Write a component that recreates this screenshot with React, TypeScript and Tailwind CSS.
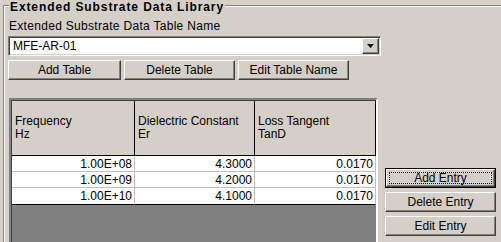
import React from "react";

const raised =
  "border border-t-white border-l-white border-r-[#404040] border-b-[#404040] shadow-[inset_-1px_-1px_0_#808080]";
const sunken =
  "border border-t-[#808080] border-l-[#808080] border-r-white border-b-white shadow-[inset_1px_1px_0_#404040,inset_-1px_-1px_0_#d4d0c8]";

const rows = [
  ["1.00E+08", "4.3000", "0.0170"],
  ["1.00E+09", "4.2000", "0.0170"],
  ["1.00E+10", "4.1000", "0.0170"],
];

const cols = [
  { w: "w-[123px]", a: "Frequency", b: "Hz" },
  { w: "w-[120px]", a: "Dielectric Constant", b: "Er" },
  { w: "w-[121px]", a: "Loss Tangent", b: "TanD" },
];

function Btn({ label, w }: { label: string; w: string }) {
  return (
    <button
      className={`${raised} ${w} h-[20px] bg-[#d4d0c8] flex items-center justify-center leading-[14px]`}
    >
      {label}
    </button>
  );
}

const App = () => {
  return (
    <div className="w-[501px] h-[242px] overflow-hidden bg-[#d4d0c8] text-[12px] text-black font-['Liberation_Sans',Arial,sans-serif]">
      <div className="relative ml-[3px] mt-[5px] w-[600px] h-[300px] border-t border-l border-[#808080] shadow-[inset_1px_1px_0_#fff] pl-[4px]">
        <span className="absolute -top-[5px] left-[5px] px-[1px] bg-[#d4d0c8] font-bold leading-[13px] tracking-[0.9px]">
          Extended Substrate Data Library
        </span>

        <div className="pt-[13px] pl-[1px] leading-[14px] tracking-[0.3px]">
          Extended Substrate Data Table Name
        </div>

        {/* combo */}
        <div className={`${sunken} mt-[3px] w-[373px] h-[20px] bg-white flex items-center p-[1px]`}>
          <span className="flex-1 pl-[3px] leading-[14px]">MFE-AR-01</span>
          <span className={`${raised} w-[17px] h-full bg-[#d4d0c8] flex items-center justify-center`}>
            <svg width="7" height="4" viewBox="0 0 7 4">
              <path d="M0 0h7L3.5 4z" fill="#000" />
            </svg>
          </span>
        </div>

        <div className="mt-[4px] flex gap-[3px]">
          <Btn label="Add Table" w="w-[113px]" />
          <Btn label="Delete Table" w="w-[111px]" />
          <Btn label="Edit Table Name" w="w-[111px]" />
        </div>

        <div className="mt-[18px] flex">
          {/* grid */}
          <div className="ml-[1px] w-[369px] h-[150px] border-2 border-t-[#808080] border-l-[#808080] border-r-white border-b-white">
            <div className="w-full h-full border-t border-l border-[#404040] bg-[#808080]">
              <div className="flex">
                {cols.map((c) => (
                  <div
                    key={c.a}
                    className={`${c.w} h-[55px] bg-[#d4d0c8] border-r border-b border-black flex flex-col justify-center pl-[3px] leading-[13px]`}
                  >
                    <span>{c.a}</span>
                    <span>{c.b}</span>
                  </div>
                ))}
              </div>
              {rows.map((r, i) => (
                <div key={i} className="flex">
                  {r.map((v, j) => (
                    <div
                      key={j}
                      className={`${cols[j].w} ${i === 2 ? "h-[17px] border-b-black" : "h-[16px] border-b-[#c0c0c0]"} border-b border-r border-r-[#c0c0c0] bg-white flex items-center justify-end pr-[2px] leading-[14px]`}
                    >
                      {v}
                    </div>
                  ))}
                </div>
              ))}
            </div>
          </div>

          <div className="ml-[7px] mt-[70px] flex flex-col gap-[4px] w-[111px]">
            <button className="w-[111px] h-[20px] border border-black bg-[#d4d0c8] flex">
              <span className={`${raised} flex-1 p-[2px] flex`}>
                <span className="flex-1 border border-dotted border-black flex items-center justify-center leading-[12px]">
                  Add Entry
                </span>
              </span>
            </button>
            <Btn label="Delete Entry" w="w-[111px]" />
            <Btn label="Edit Entry" w="w-[111px]" />
          </div>
        </div>
      </div>
    </div>
  );
};

export default App;
